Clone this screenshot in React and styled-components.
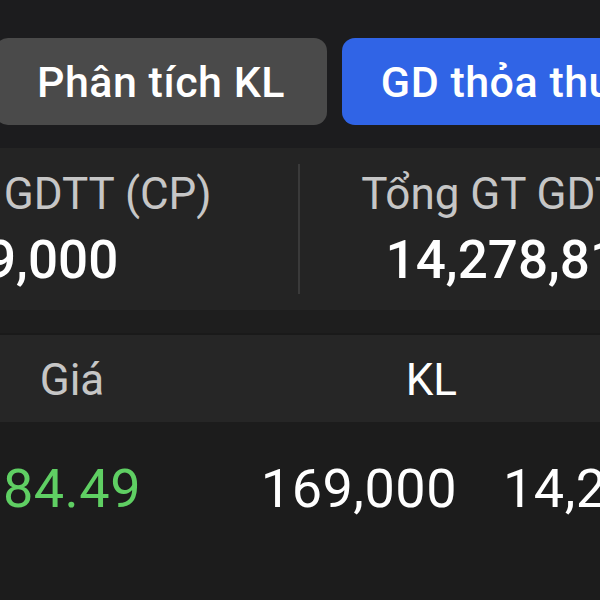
import React from "react";
import styled, { createGlobalStyle } from "styled-components";

const Global = createGlobalStyle`
  html, body { margin: 0; padding: 0; background: #1c1c1e; }
  body { font-family: Roboto, "Noto Sans", sans-serif; }
`;

const Screen = styled.div`
  width: 600px;
  height: 600px;
  overflow: hidden;
  background: #1c1c1e;
  display: flex;
  flex-direction: column;
`;

const Tabs = styled.div`
  display: flex;
  gap: 15px;
  height: 87px;
  padding: 38px 0 23px;
  margin-left: -5px;
  flex-shrink: 0;
`;

const Tab = styled.div`
  flex: 0 0 ${(p) => p.$w}px;
  height: 87px;
  border-radius: 13px;
  background: ${(p) => (p.$active ? "#3064e6" : "#4a4a4a")};
  color: #fff;
  display: flex;
  align-items: center;
  justify-content: center;
  font-size: 43px;
  font-weight: 500;
  letter-spacing: 0.5px;
  white-space: nowrap;
  overflow: hidden;
`;

const Stats = styled.div`
  display: flex;
  align-items: center;
  height: 162px;
  background: #242424;
  margin-left: -254px;
  flex-shrink: 0;
`;

const StatCol = styled.div`
  flex: 0 0 ${(p) => p.$w}px;
  display: flex;
  flex-direction: column;
  align-items: center;
  white-space: nowrap;
`;

const StatLabel = styled.div`
  font-size: 44px;
  line-height: 52px;
  color: #c6c6c6;
  font-weight: 400;
`;

const StatValue = styled.div`
  font-size: 53px;
  line-height: 60px;
  color: #fff;
  font-weight: 500;
  margin-top: 10px;
`;

const Divider = styled.div`
  flex: 0 0 2px;
  height: 130px;
  background: #3a3a3a;
`;

const Gap = styled.div`
  height: 25px;
  background: #1e1e1e;
  border-bottom: 2px solid #1a1a1a;
  box-sizing: border-box;
  flex-shrink: 0;
`;

const Row = styled.div`
  display: grid;
  grid-template-columns: 144px 313px 315px;
  align-items: start;
  box-sizing: border-box;
  height: ${(p) => p.$h}px;
  padding-top: ${(p) => p.$pt}px;
  background: ${(p) => p.$bg};
  flex-shrink: 0;
  white-space: nowrap;
  overflow: hidden;
`;

const Cell = styled.div`
  text-align: ${(p) => p.$align || "center"};
  font-size: ${(p) => (p.$head ? 44 : 54)}px;
  letter-spacing: ${(p) => (p.$head ? 0 : 0.5)}px;
  line-height: 1.2;
  font-weight: 400;
  color: ${(p) => p.$color || "#fff"};
`;

export default function App() {
  return (
    <>
      <Global />
      <Screen>
        <Tabs>
          <Tab $w={332}>Phân tích KL</Tab>
          <Tab $w={358} $active>GD thỏa thuận</Tab>
        </Tabs>
        <Stats>
          <StatCol $w={552}>
            <StatLabel>Tổng KL GDTT (CP)</StatLabel>
            <StatValue>169,000</StatValue>
          </StatCol>
          <Divider />
          <StatCol $w={538}>
            <StatLabel>Tổng GT GDTT (VND)</StatLabel>
            <StatValue>14,278,810,000</StatValue>
          </StatCol>
        </Stats>
        <Gap />
        <Row $h={87} $pt={19} $bg="#262626">
          <Cell $head $color="#c6c6c6">Giá</Cell>
          <Cell $head $align="right">KL</Cell>
          <Cell $head $align="right">Giá trị</Cell>
        </Row>
        <Row $h={178} $pt={35} $bg="#1c1c1c">
          <Cell $color="#5fcf63">84.49</Cell>
          <Cell $align="right">169,000</Cell>
          <Cell $align="right">14,278,810</Cell>
        </Row>
      </Screen>
    </>
  );
}
